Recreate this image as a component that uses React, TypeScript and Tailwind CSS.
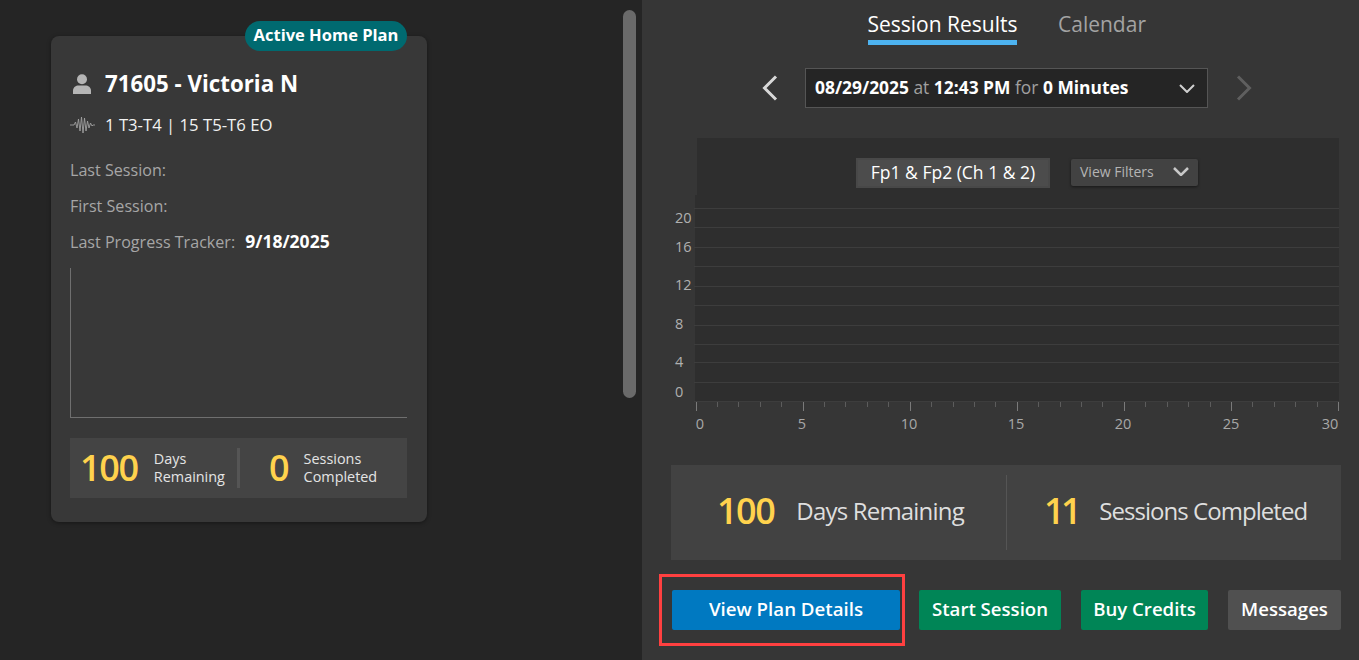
import React from "react";

const F = { fontFamily: '"Open Sans", "Noto Sans", sans-serif' };

function UserIcon() {
  return (
    <svg width="18" height="20" viewBox="0 0 18 20" fill="#b5b5b5">
      <circle cx="9" cy="5.2" r="5" />
      <path d="M0 20v-3.5C0 13.2 3 11.4 5.500 11.400h7c2.500 0 5.500 1.800 5.500 5.100V20z" />
    </svg>
  );
}

function WaveIcon() {
  return (
    <svg width="25" height="20" viewBox="0 0 25 20" fill="none" stroke="#a0a0a0" strokeWidth="0.9">
      <path d="M0 10H4L5.500 7 7 13 8.500 4 10 16 11.500 2 13 18 14.500 3 16 16 17.500 6 19 13 20.500 8 22 11 23 10H25" />
    </svg>
  );
}

function Chevron({ dim = false }: { dim?: boolean }) {
  return (
    <svg width="16" height="26" viewBox="0 0 16 26" fill="none" stroke={dim ? "#5f5f5f" : "#d8d8d8"} strokeWidth="3">
      <path d="M14 1.500 2.500 13 14 24.500" transform={dim ? "matrix(-1 0 0 1 16 0)" : undefined} />
    </svg>
  );
}

function Caret({ w = 16, h = 9, color = "#d0d0d0", sw = 2 }: { w?: number; h?: number; color?: string; sw?: number }) {
  return (
    <svg width={w} height={h} viewBox="0 0 16 9" fill="none" stroke={color} strokeWidth={sw}>
      <path d="M1 1l7 7 7-7" />
    </svg>
  );
}

function Chart() {
  const ys = [208.5, 227.5, 247.5, 266.5, 286.5, 305.5, 325.5, 344.5, 362.5, 382.5, 401.5];
  const yl: [string, number][] = [["20", 223], ["16", 252], ["12", 290], ["8", 329], ["4", 367], ["0", 397]];
  const xl: [string, number][] = [["0", 700], ["5", 802], ["10", 909], ["15", 1016], ["20", 1123], ["25", 1231], ["30", 1330]];
  const x0 = 695.5;
  const step = (1338 - 695.5) / 30;
  return (
    <svg width="670" height="245" viewBox="671 195 670 245" className="block">
      {ys.map((y) => (
        <line key={y} x1="694" x2="1339" y1={y} y2={y} stroke="#3d3d3d" strokeWidth="1" />
      ))}
      {Array.from({ length: 31 }, (_, i) => {
        const x = Math.round(x0 + i * step) + 0.5;
        return <line key={i} x1={x} x2={x} y1="402" y2={i % 5 === 0 ? 411 : 407} stroke={i % 5 === 0 ? "#7a7a7a" : "#5c5c5c"} />;
      })}
      {yl.map(([t, y]) => (
        <text key={t} x="675" y={y} fill="#b0b0b0" fontSize="14.5" style={F}>{t}</text>
      ))}
      {xl.map(([t, x]) => (
        <text key={t} x={x} y="429" fill="#a8a8a8" fontSize="14.5" textAnchor="middle" style={F}>{t}</text>
      ))}
    </svg>
  );
}

export default function App() {
  return (
    <div style={F} className="relative flex h-[660px] w-[1359px] overflow-hidden bg-[#252525] text-white">
      {/* left */}
      <div className="relative w-[642px] shrink-0 pl-[51px] pt-[36px]">
        <div className="absolute left-[623px] top-[10px] h-[388px] w-[13px] rounded-full bg-[#6a6a6a]" />
        <div className="relative h-[486px] w-[376px] rounded-[8px] bg-[#383838] px-[19px] pt-[35px] shadow-[0_1px_4px_rgba(0,0,0,0.4)]">
          <div className="absolute right-[20px] top-[-15px] flex h-[30px] w-[162px] items-center justify-center rounded-full bg-[#006a70] pb-[2px] text-[16.5px] font-bold whitespace-nowrap">
            Active Home Plan
          </div>
          <div className="flex h-[26px] items-center pl-[3px]">
            <UserIcon />
            <span className="ml-[14px] text-[22.3px] font-bold leading-none whitespace-nowrap">71605 - Victoria N</span>
          </div>
          <div className="mt-[16px] flex h-[24px] items-center">
            <WaveIcon />
            <span className="ml-[10px] text-[16.7px] text-[#f2f2f2] whitespace-nowrap">1 T3-T4 | 15 T5-T6 EO</span>
          </div>
          <div className="mt-[21px] flex flex-col gap-[12px] text-[16.1px] leading-[24px] text-[#a6a6a6]">
            <div>Last Session:</div>
            <div>First Session:</div>
            <div className="flex h-[24px] items-center whitespace-nowrap">
              <span className="pb-[1px]">Last Progress Tracker:</span>
              <span className="ml-[10px] pb-[2px] text-[17.5px] leading-[22px] font-bold text-white">9/18/2025</span>
            </div>
          </div>
          <div className="mt-[14px] h-[150px] w-[337px] border-b border-l border-[#6f6f6f]" />
          <div className="mt-[20px] flex h-[60px] w-[337px] items-center bg-[#444444]">
            <div className="flex w-[167px] items-center pl-[10px]">
              <span className="text-[36px] font-semibold leading-none tracking-[-1.3px] text-[#ffd24d]">100</span>
              <span className="ml-[16px] text-[14.4px] leading-[18px] text-[#e4e4e4]">Days<br />Remaining</span>
            </div>
            <div className="h-[40px] w-[3px] bg-[#555555]" />
            <div className="flex items-center pl-[29px]">
              <span className="text-[36px] font-semibold leading-none text-[#ffd24d]">0</span>
              <span className="ml-[14px] text-[14.4px] leading-[18px] text-[#e4e4e4]">Sessions<br />Completed</span>
            </div>
          </div>
        </div>
      </div>

      {/* right */}
      <div className="flex w-[717px] flex-col bg-[#363636] pl-[29px]">
        <div className="flex h-[45px] pl-[197px]">
          <div className="flex h-[45px] w-[149px] items-end justify-center border-b-[5px] border-[#4db3f0] text-[21px] leading-[31px] whitespace-nowrap">
            Session Results
          </div>
          <div className="ml-[41px] flex h-[40px] items-end text-[21px] leading-[31px] text-[#a3a3a3]">Calendar</div>
        </div>
        <div className="mt-[23px] flex h-[40px] items-center pl-[91px]">
          <Chevron />
          <div className="ml-[27px] flex h-[40px] w-[403px] items-center justify-between border border-[#555555] bg-[#252525] pl-[9px] pr-[12px] text-[17.4px] whitespace-nowrap">
            <span className="pb-[1px]">
              <b>08/29/2025</b> <span className="text-[#a0a0a0]">at</span> <b>12:43 PM</b> <span className="text-[#a0a0a0]">for</span> <b>0 Minutes</b>
            </span>
            <Caret />
          </div>
          <div className="ml-[28px]"><Chevron dim /></div>
        </div>
        <div className="mt-[30px] ml-[26px] h-[57px] w-[642px] bg-[#2e2e2e] pt-[20px]">
          <div className="flex items-start pl-[159px]">
            <div className="flex h-[30px] w-[194px] items-center justify-center border-2 border-[#484848] bg-[#4c4c4c] pb-[2px] text-[17.5px] whitespace-nowrap">
              Fp1 &amp; Fp2 (Ch 1 &amp; 2)
            </div>
            <div className="ml-[21px] mt-[1px] flex h-[27px] w-[127px] items-center justify-between rounded-[2px] bg-[#424242] pb-[2px] pl-[9px] pr-[9px] text-[14px] text-[#b4b4b4] shadow-[0_1px_3px_rgba(0,0,0,0.5)]">
              View Filters
              <Caret color="#c8c8c8" sw={2.5} />
            </div>
          </div>
        </div>
        <div className="relative h-[245px]">
          <div className="absolute left-[24px] top-0 h-[207px] w-[644px] bg-[#2e2e2e]" />
          <div className="relative"><Chart /></div>
        </div>
        <div className="mt-[25px] flex h-[95px] w-[670px] items-center bg-[#424242]">
          <div className="mb-[4px] flex w-[335px] items-center pl-[46px]">
            <span className="text-[36px] font-semibold leading-none tracking-[-1.5px] text-[#ffd24d]">100</span>
            <span className="ml-[22px] text-[24px] tracking-[-0.8px] text-[#dedede] whitespace-nowrap">Days Remaining</span>
          </div>
          <div className="h-[75px] w-px bg-[#555555]" />
          <div className="mb-[4px] flex items-center pl-[37px]">
            <span className="text-[36px] font-semibold leading-none tracking-[-3.5px] text-[#ffd24d]">11</span>
            <span className="ml-[21px] text-[24px] tracking-[-0.95px] text-[#dedede] whitespace-nowrap">Sessions Completed</span>
          </div>
        </div>
        <div className="ml-[-12px] mt-[14px] flex items-center">
          <div className="flex h-[72px] w-[246px] items-center border-[3px] border-[#ff4040] pl-[10px]">
            <button className="h-[40px] w-[228px] rounded-[2px] bg-[#0079c1] pb-[2px] text-[18.7px] font-semibold">View Plan Details</button>
          </div>
          <button className="ml-[14px] h-[40px] w-[142px] rounded-[2px] bg-[#008556] pb-[2px] text-[18.6px] font-semibold">Start Session</button>
          <button className="ml-[20px] h-[40px] w-[127px] rounded-[2px] bg-[#008556] pb-[2px] text-[18.6px] font-semibold">Buy Credits</button>
          <button className="ml-[20px] h-[40px] w-[113px] rounded-[2px] bg-[#505050] pb-[2px] text-[18.6px] font-semibold">Messages</button>
        </div>
      </div>
    </div>
  );
}
